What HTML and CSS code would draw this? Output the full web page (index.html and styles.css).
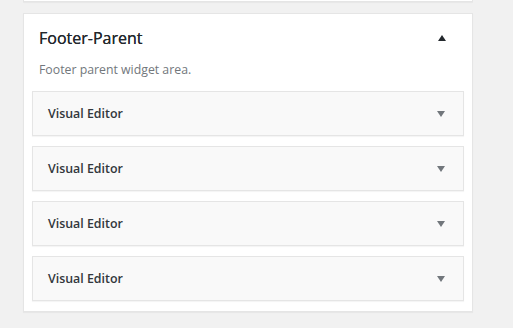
FILE: index.html
```html
<!DOCTYPE html>
<html lang="en">
<head>
  <meta charset="UTF-8" />
  <title>Widgets</title>
  <link rel="stylesheet" href="styles.css">
</head>
<body>

  <div class="sidebar sidebar-prev"></div>

  <div class="sidebar">
    <div class="sidebar-head">
      <h2>Footer-Parent</h2>
      <span class="arrow arrow-up"></span>
    </div>
    <p class="sidebar-desc">Footer parent widget area.</p>

    <div class="widget-list">
      <div class="widget">
        <span class="widget-title">Visual Editor</span>
        <span class="arrow arrow-down"></span>
      </div>
      <div class="widget">
        <span class="widget-title">Visual Editor</span>
        <span class="arrow arrow-down"></span>
      </div>
      <div class="widget">
        <span class="widget-title">Visual Editor</span>
        <span class="arrow arrow-down"></span>
      </div>
      <div class="widget">
        <span class="widget-title">Visual Editor</span>
        <span class="arrow arrow-down"></span>
      </div>
    </div>
  </div>

</body>
</html>
```

FILE: styles.css
```css
body {
  font-family: 'Open Sans', 'Noto Sans', sans-serif;
  background: #f1f1f1;
  margin: 0;
  padding: 0 0 0 23px;
  color: #23282d;
}

.sidebar {
  width: 432px;
  background: #fff;
  border: 1px solid #e5e5e5;
  box-shadow: 0 1px 1px rgba(0,0,0,0.04);
  padding: 0 8px 10px;
  margin-bottom: 11px;
}

.sidebar-prev {
  height: 1px;
  padding: 0 8px;
  border-top: none;
}

.sidebar-head {
  display: flex;
  align-items: center;
  justify-content: space-between;
  height: 48px;
  padding: 0 18px 0 7px;
}

.sidebar-head h2 {
  margin: 0;
  font-size: 16px;
  font-weight: 400;
  color: #23282d;
  text-shadow: 0 0 0.3px #23282d;
}

.sidebar-desc {
  margin: 0 0 14px 7px;
  font-size: 12.3px;
  line-height: 15px;
  color: #72777c;
}

.widget-list {
  display: flex;
  flex-direction: column;
  gap: 10px;
}

.widget {
  display: flex;
  align-items: center;
  justify-content: space-between;
  height: 43px;
  background: #f9f9f9;
  border: 1px solid #e5e5e5;
  box-shadow: 0 1px 1px rgba(0,0,0,0.04);
  padding: 0 18px 0 15px;
}

.widget-title {
  font-size: 12.4px;
  font-weight: 600;
  color: #32373c;
}

.arrow {
  width: 0;
  height: 0;
  border-left: 4px solid transparent;
  border-right: 4px solid transparent;
}

.arrow-up {
  border-bottom: 6px solid #23282d;
}

.arrow-down {
  border-top: 6px solid #72777c;
}
```
